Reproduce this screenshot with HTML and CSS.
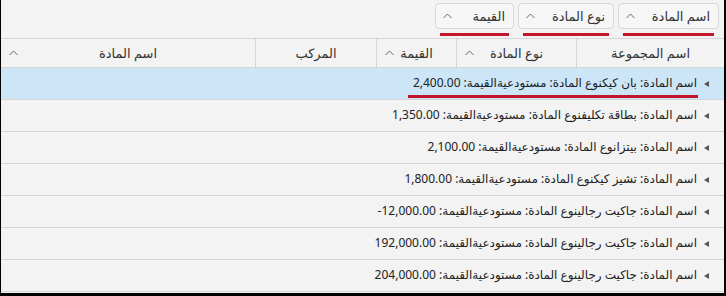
FILE: index.html
```html
<!DOCTYPE html>
<html lang="ar" dir="rtl">
<head>
    <meta charset="UTF-8">
    <title>شبكة المواد</title>
    <link rel="stylesheet" href="styles.css">
</head>
<body>

<div class="frame">
    <!-- group by panel -->
    <div class="group-panel">
        <div class="group-item">
            <div class="chip"><span>اسم المادة</span><svg class="caret" width="9" height="6" viewBox="0 0 9 6"><polyline points="0.5,5 4.5,1 8.5,5" /></svg></div>
            <div class="mark"></div>
        </div>
        <div class="group-item">
            <div class="chip chip-type"><span>نوع المادة</span><svg class="caret" width="9" height="6" viewBox="0 0 9 6"><polyline points="0.5,5 4.5,1 8.5,5" /></svg></div>
            <div class="mark"></div>
        </div>
        <div class="group-item">
            <div class="chip chip-value"><span>القيمة</span><svg class="caret" width="9" height="6" viewBox="0 0 9 6"><polyline points="0.5,5 4.5,1 8.5,5" /></svg></div>
            <div class="mark"></div>
        </div>
    </div>

    <!-- column headers -->
    <div class="grid-header">
        <div class="col col-group"><span>اسم المجموعة</span></div>
        <div class="col col-type"><span>نوع المادة</span><svg class="caret" width="9" height="6" viewBox="0 0 9 6"><polyline points="0.5,5 4.5,1 8.5,5" /></svg></div>
        <div class="col col-value"><span>القيمة</span><svg class="caret" width="9" height="6" viewBox="0 0 9 6"><polyline points="0.5,5 4.5,1 8.5,5" /></svg></div>
        <div class="col col-comp"><span>المركب</span></div>
        <div class="col col-name"><span>اسم المادة</span><svg class="caret" width="9" height="6" viewBox="0 0 9 6"><polyline points="0.5,5 4.5,1 8.5,5" /></svg></div>
    </div>

    <!-- group rows -->
    <div class="rows">
        <div class="group-row selected">
            <span class="expander"></span>
            <span class="row-text">اسم المادة: بان كيكنوع المادة: مستودعيةالقيمة: 2,400.00<span class="underline"></span></span>
        </div>
        <div class="group-row">
            <span class="expander"></span>
            <span class="row-text">اسم المادة: بطاقة تكليفنوع المادة: مستودعيةالقيمة: 1,350.00</span>
        </div>
        <div class="group-row">
            <span class="expander"></span>
            <span class="row-text">اسم المادة: بيتزانوع المادة: مستودعيةالقيمة: 2,100.00</span>
        </div>
        <div class="group-row">
            <span class="expander"></span>
            <span class="row-text">اسم المادة: تشيز كيكنوع المادة: مستودعيةالقيمة: 1,800.00</span>
        </div>
        <div class="group-row">
            <span class="expander"></span>
            <span class="row-text">اسم المادة: جاكيت رجالينوع المادة: مستودعيةالقيمة: 12,000.00-</span>
        </div>
        <div class="group-row">
            <span class="expander"></span>
            <span class="row-text">اسم المادة: جاكيت رجالينوع المادة: مستودعيةالقيمة: 192,000.00</span>
        </div>
        <div class="group-row">
            <span class="expander"></span>
            <span class="row-text">اسم المادة: جاكيت رجالينوع المادة: مستودعيةالقيمة: 204,000.00</span>
        </div>
    </div>
</div>

</body>
</html>
```

FILE: styles.css
```css
body {
    margin: 0;
    padding: 0;
    font-family: "Noto Sans", "DejaVu Sans", sans-serif;
    font-size: 12px;
    color: #222;
    background-color: #000;
    overflow: hidden;
}

.frame {
    width: 726px;
    height: 296px;
    box-sizing: border-box;
    background-color: #f3f3f3;
    border-left: 1px solid #000;
    border-right: 2px solid #000;
    border-bottom: 3px solid #000;
    overflow: hidden;
}

/* Group panel */
.group-panel {
    height: 38px;
    box-sizing: border-box;
    display: flex;
    gap: 4px;
    padding: 3px 5px 0 0;
}

.group-item {
    display: flex;
    flex-direction: column;
}

.chip {
    width: 101px;
    height: 26px;
    box-sizing: border-box;
    border: 1px solid #d9d9d9;
    border-radius: 4px;
    background-color: #f6f6f6;
    display: flex;
    align-items: center;
    justify-content: space-between;
    padding: 0 8px 0 7px;
    font-size: 13px;
    color: #333;
}

.chip-type {
    width: 96px;
}

.chip-value {
    width: 79px;
}

.mark {
    height: 3px;
    margin: 4px 5px 0 5px;
    background-color: #c4162a;
}

.caret {
    flex: none;
}

.caret polyline {
    fill: none;
    stroke: #666;
    stroke-width: 1;
}

/* Column headers */
.grid-header {
    display: flex;
    height: 30px;
    box-sizing: border-box;
    border-top: 1px solid #d6d6d6;
    border-bottom: 1px solid #d6d6d6;
    font-size: 13px;
}

.col {
    display: flex;
    align-items: center;
    justify-content: center;
    position: relative;
    border-left: 1px solid #d6d6d6;
    color: #333;
}

.col .caret {
    position: absolute;
    left: 8px;
    top: 11px;
}

.col-group {
    width: 147px;
}

.col-type {
    width: 119px;
}

.col-value {
    width: 79px;
}

.col-comp {
    width: 120px;
}

.col-name {
    flex: 1;
    border-left: none;
}

/* Rows */
.group-row {
    height: 32px;
    box-sizing: border-box;
    border-bottom: 1px solid #d6d6d6;
    display: flex;
    align-items: center;
    padding-right: 15px;
    gap: 7px;
}

.group-row.selected {
    background-color: #cce6f8;
}

.expander {
    width: 0;
    height: 0;
    border-top: 3.5px solid transparent;
    border-bottom: 3.5px solid transparent;
    border-right: 5px solid #555;
}

.row-text {
    position: relative;
    white-space: nowrap;
    top: -1px;
}

.underline {
    position: absolute;
    left: -5px;
    right: -1px;
    bottom: -7px;
    height: 3px;
    background-color: #c4162a;
}
```
